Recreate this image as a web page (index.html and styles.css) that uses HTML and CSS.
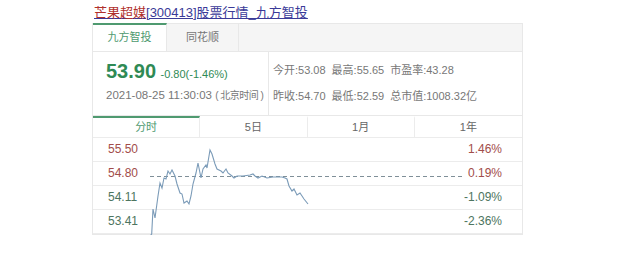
FILE: index.html
```html
<!DOCTYPE html>
<html lang="zh-CN">
<head>
    <meta charset="UTF-8">
    <title>芒果超媒[300413]股票行情_九方智投</title>
    <link rel="stylesheet" href="styles.css">
</head>
<body>
    <div class="wrap">
        <a class="title" href="#"><span class="title-name">芒果超媒</span>[300413]股票行情_九方智投</a>

        <div class="card">
            <div class="tabs">
                <div class="tab active">九方智投</div>
                <div class="tab">同花顺</div>
            </div>

            <div class="quote">
                <div class="quote-main">
                    <div class="price-line">
                        <span class="price">53.90</span>
                        <span class="change">-0.80(-1.46%)</span>
                    </div>
                    <div class="time">2021-08-25 11:30:03 <span class="zone">( 北京时间 )</span></div>
                </div>
                <div class="quote-info">
                    <div class="info-row">
                        <span>今开:53.08</span>
                        <span>最高:55.65</span>
                        <span>市盈率:43.28</span>
                    </div>
                    <div class="info-row">
                        <span>昨收:54.70</span>
                        <span>最低:52.59</span>
                        <span>总市值:1008.32亿</span>
                    </div>
                </div>
            </div>

            <div class="periods">
                <div class="period active">分时</div>
                <div class="period">5日</div>
                <div class="period">1月</div>
                <div class="period">1年</div>
            </div>

            <div class="chart">
                <div class="chart-row"><span class="up">55.50</span><span class="up">1.46%</span></div>
                <div class="chart-row"><span class="up">54.80</span><span class="up">0.19%</span></div>
                <div class="chart-row"><span class="down">54.11</span><span class="down">-1.09%</span></div>
                <div class="chart-row"><span class="down">53.41</span><span class="down">-2.36%</span></div>

                <svg class="chart-line" width="429" height="104" viewBox="0 0 429 104">
                    <line x1="57" y1="38.5" x2="370" y2="38.5" stroke="#7f8f98" stroke-width="1" stroke-dasharray="4 3"/>
                    <polyline fill="none" stroke="#7b9bb8" stroke-width="1.1"
                        points="57,98 58.7,96 60,71 62,80 65,58 67,45 69,50 71,40 73,41 75,33 77,36 79,32 82,38 84,46 87,55 89,56 91,65 94,63 96,66 98,58 100,46 103,35 105,25 108,40 110,31 113,27 114,30 117,12 119,16 122,26 124,31 128,33 130,35 133,31 135,35 139,38 141,40 144,38 150,38 157,37 160,36 162,38 165,40 169,38 174,40 180,39 189,39 192,40 194,41 196,48 199,53 201,51 204,57 207,55 211,61 215,66"/>
                </svg>
            </div>
        </div>
    </div>
</body>
</html>
```

FILE: styles.css
```css
body {
    margin: 0;
    background-color: #fff;
    font-family: "Liberation Sans", "Noto Sans CJK SC", sans-serif;
    color: #666;
}

.wrap {
    width: 431px;
    margin-left: 92px;
    padding-top: 3px;
}

.title {
    display: inline-block;
    font-size: 13px;
    line-height: 18px;
    margin-left: 2px;
    color: #3a3a98;
    text-decoration: underline;
}

.title-name {
    color: #b0302c;
}

.card {
    margin-top: 1px;
    border: 1px solid #e8e8e8;
}

.tabs {
    display: flex;
    height: 27px;
    background-color: #f5f5f5;
    border-bottom: 1px solid #e8e8e8;
}

.tab {
    width: 71px;
    line-height: 27px;
    text-align: center;
    font-size: 11px;
    color: #777;
    border-right: 1px solid #e8e8e8;
}

.tab.active {
    width: 73px;
    height: 26px;
    line-height: 25px;
    background-color: #fff;
    color: #4f9a70;
    border-top: 2px solid #4f9a70;
    margin-top: -1px;
}

.quote {
    display: flex;
    height: 63px;
    border-bottom: 1px solid #e8e8e8;
}

.quote-main {
    width: 162px;
    padding: 8px 0 0 13px;
    border-right: 1px solid #e8e8e8;
}

.price-line {
    height: 26px;
}

.price {
    font-size: 20px;
    font-weight: bold;
    color: #2f8a55;
}

.change {
    font-size: 11px;
    color: #2f8a55;
}

.time {
    font-size: 11.5px;
    line-height: 18px;
    color: #777;
    white-space: nowrap;
}

.zone {
    font-size: 10px;
    letter-spacing: -0.5px;
}

.quote-info {
    padding: 9px 0 0 4px;
    font-size: 11px;
    color: #777;
}

.info-row {
    display: flex;
    gap: 6px;
    height: 26px;
    white-space: nowrap;
}

.periods {
    display: grid;
    grid-template-columns: repeat(4, 1fr);
    border-bottom: 1px solid #ececec;
}

.period {
    height: 19px;
    line-height: 19px;
    text-align: center;
    font-size: 11px;
    color: #666;
    border-right: 1px solid #ececec;
    border-top: 2px solid transparent;
}

.period:last-child {
    border-right: none;
}

.period.active {
    color: #4f9a70;
    border-top-color: #4f9a70;
}

.chart {
    position: relative;
}

.chart-row {
    display: flex;
    justify-content: space-between;
    height: 23px;
    line-height: 23px;
    padding: 0 20px 0 15px;
    font-size: 12px;
    border-bottom: 1px solid #ececec;
}

.up {
    color: #a24d4a;
}

.down {
    color: #4d7560;
}

.chart-line {
    position: absolute;
    left: 0;
    top: 0;
}
```
